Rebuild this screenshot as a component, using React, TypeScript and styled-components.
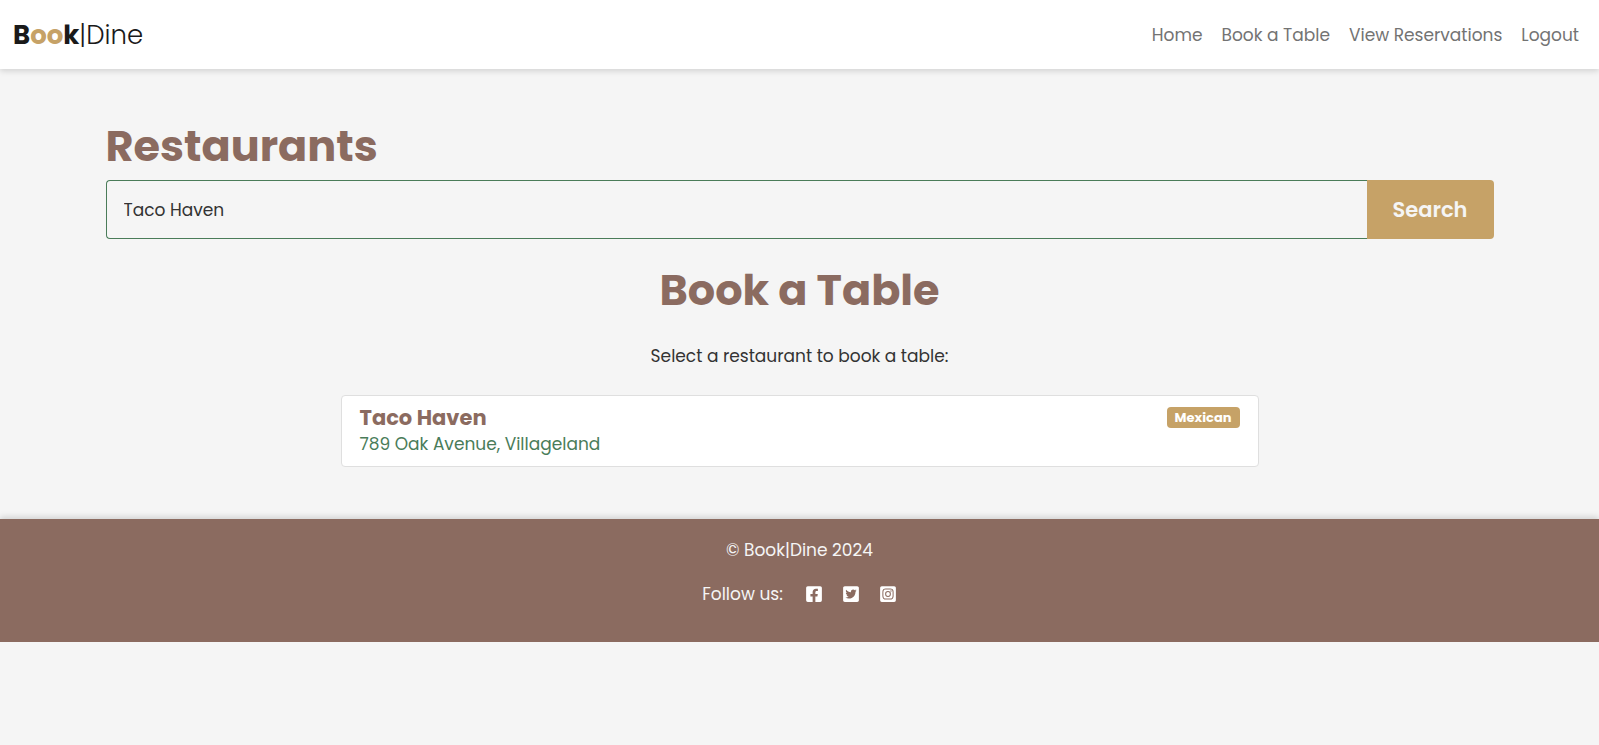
import React, { useState } from "react";
import styled, { createGlobalStyle } from "styled-components";
import { FaFacebookSquare, FaTwitterSquare, FaInstagramSquare } from "react-icons/fa";

const colors = {
  brown: "#8b6b60",
  gold: "#c6a267",
  green: "#4a7c59",
  page: "#f5f5f5",
  text: "#333333",
  nav: "#737373",
};

const GlobalStyle = createGlobalStyle`
  *, *::before, *::after { box-sizing: border-box; }
  body {
    margin: 0;
    background: ${colors.page};
    color: ${colors.text};
    font-family: Poppins, Inter, "Open Sans", sans-serif;
    font-size: 17px;
    font-weight: 400;
    line-height: 26px;
  }
  h1, h2, h3, p, ul { margin: 0; padding: 0; }
  a { text-decoration: none; }
`;

const Header = styled.header`
  display: flex;
  align-items: center;
  justify-content: space-between;
  padding: 14px 20px 14px 13px;
  background: #ffffff;
  box-shadow: 0 2px 6px rgba(0, 0, 0, 0.15);
`;

const Brand = styled.a`
  padding-top: 2px;
  color: #1a1a1a;
  font-size: 26px;
  font-weight: 300;
  line-height: 39px;
`;

const BrandBold = styled.span<{ $accent?: boolean }>`
  color: ${(p) => (p.$accent ? colors.gold : "inherit")};
  font-weight: 700;
`;

const NavList = styled.ul`
  display: flex;
  gap: 19px;
  list-style: none;
`;

const NavLink = styled.a`
  color: ${colors.nav};
`;

const Main = styled.main`
  max-width: 1388px;
  margin: 0 auto;
  padding: 51px 0 52px;
`;

const Title = styled.h1`
  color: ${colors.brown};
  font-size: 43px;
  font-weight: 700;
  line-height: 52px;
`;

const Subtitle = styled(Title).attrs({ as: "h2" })`
  margin-top: 25px;
  text-align: center;
`;

const SearchForm = styled.form`
  display: flex;
  height: 59px;
  margin-top: 8px;
`;

const SearchInput = styled.input`
  flex: 1;
  min-width: 0;
  padding: 0 17px;
  border: 1px solid ${colors.green};
  border-right: 0;
  border-radius: 4px 0 0 4px;
  background: transparent;
  color: ${colors.text};
  font: inherit;
  outline: none;
`;

const SearchButton = styled.button`
  width: 127px;
  border: 0;
  border-radius: 0 4px 4px 0;
  background: ${colors.gold};
  color: ${colors.page};
  font: inherit;
  font-size: 21px;
  font-weight: 600;
  cursor: pointer;
`;

const Prompt = styled.p`
  margin-top: 27px;
  text-align: center;
`;

const RestaurantList = styled.ul`
  max-width: 918px;
  margin: 26px auto 0;
  list-style: none;
`;

const RestaurantCard = styled.a`
  display: flex;
  align-items: flex-start;
  justify-content: space-between;
  padding: 9px 18px;
  border: 1px solid #dfdfdf;
  border-radius: 4px;
  background: #ffffff;
`;

const RestaurantName = styled.h3`
  color: ${colors.brown};
  font-size: 21px;
  font-weight: 700;
  line-height: 26px;
`;

const Address = styled.p`
  color: ${colors.green};
`;

const Badge = styled.span`
  margin-top: 2px;
  padding: 0 8px;
  border-radius: 4px;
  background: ${colors.gold};
  color: #ffffff;
  font-size: 13px;
  font-weight: 700;
  line-height: 21px;
`;

const Footer = styled.footer`
  display: flex;
  flex-direction: column;
  align-items: center;
  gap: 18px;
  padding: 18px 0 35px;
  background: ${colors.brown};
  color: ${colors.page};
  box-shadow: 0 -2px 6px rgba(0, 0, 0, 0.15);
`;

const Social = styled.div`
  display: flex;
  align-items: center;
  gap: 22px;
`;

const SocialLinks = styled.div`
  display: flex;
  gap: 19px;
`;

const SocialLink = styled.a`
  display: flex;
  color: #ffffff;
  font-size: 18px;
`;

const navItems = ["Home", "Book a Table", "View Reservations", "Logout"];

const restaurants = [
  { name: "Taco Haven", address: "789 Oak Avenue, Villageland", cuisine: "Mexican" },
];

const socials = [
  { label: "Facebook", Icon: FaFacebookSquare },
  { label: "Twitter", Icon: FaTwitterSquare },
  { label: "Instagram", Icon: FaInstagramSquare },
];

export default function App() {
  const [query, setQuery] = useState("Taco Haven");

  return (
    <>
      <GlobalStyle />
      <Header>
        <Brand href="#">
          <BrandBold>B</BrandBold>
          <BrandBold $accent>oo</BrandBold>
          <BrandBold>k</BrandBold>|Dine
        </Brand>
        <nav>
          <NavList>
            {navItems.map((item) => (
              <li key={item}>
                <NavLink href="#">{item}</NavLink>
              </li>
            ))}
          </NavList>
        </nav>
      </Header>
      <Main>
        <Title>Restaurants</Title>
        <SearchForm role="search" onSubmit={(e) => e.preventDefault()}>
          <SearchInput
            type="text"
            aria-label="Search restaurants"
            value={query}
            onChange={(e) => setQuery(e.target.value)}
          />
          <SearchButton type="submit">Search</SearchButton>
        </SearchForm>
        <Subtitle>Book a Table</Subtitle>
        <Prompt>Select a restaurant to book a table:</Prompt>
        <RestaurantList>
          {restaurants.map((r) => (
            <li key={r.name}>
              <RestaurantCard href="#">
                <div>
                  <RestaurantName>{r.name}</RestaurantName>
                  <Address>{r.address}</Address>
                </div>
                <Badge>{r.cuisine}</Badge>
              </RestaurantCard>
            </li>
          ))}
        </RestaurantList>
      </Main>
      <Footer>
        <p>© Book|Dine 2024</p>
        <Social>
          <span>Follow us:</span>
          <SocialLinks>
            {socials.map(({ label, Icon }) => (
              <SocialLink key={label} href="#" aria-label={label}>
                <Icon />
              </SocialLink>
            ))}
          </SocialLinks>
        </Social>
      </Footer>
    </>
  );
}
